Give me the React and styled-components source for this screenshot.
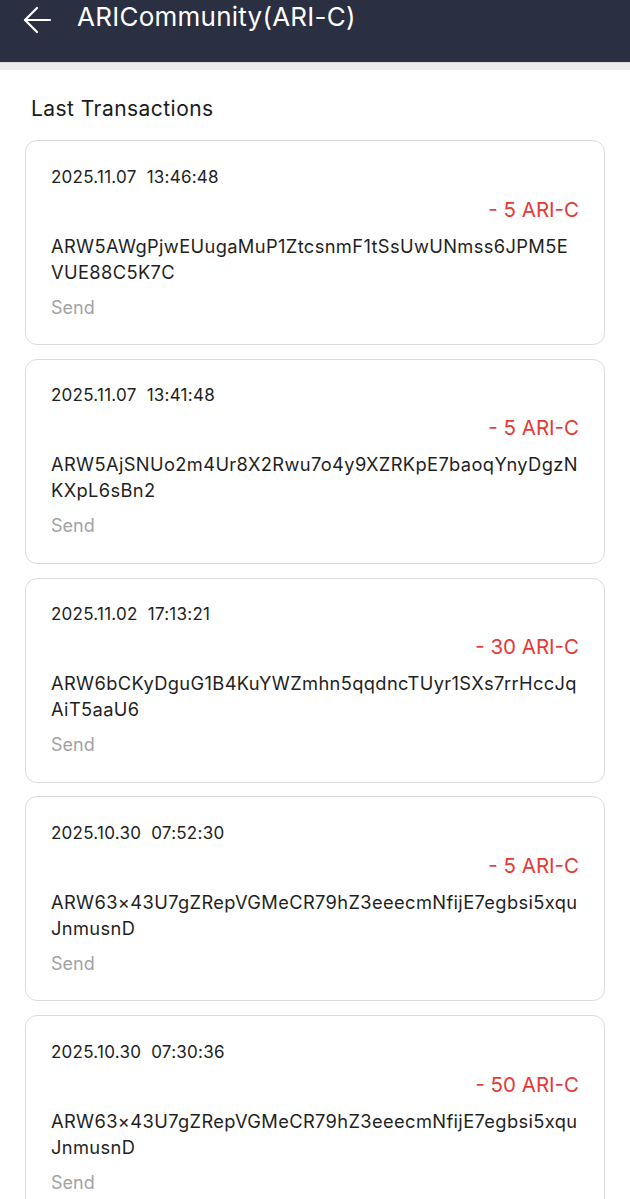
import styled, { createGlobalStyle } from "styled-components";

const GlobalStyle = createGlobalStyle`
  * { box-sizing: border-box; }
  body {
    margin: 0;
    background: #ffffff;
    font-family: Inter, Roboto, "Noto Sans", sans-serif;
    color: #1f1f1f;
  }
`;

const Page = styled.div`
  width: 630px;
  min-height: 1199px;
  background: #ffffff;
  overflow: hidden;
`;

const Header = styled.header`
  height: 62px;
  background: #2b2f42;
  display: flex;
  align-items: flex-start;
  gap: 25px;
  padding: 0 0 0 22px;
  color: #ffffff;
`;

const BackButton = styled.button`
  border: 0;
  background: transparent;
  padding: 0;
  margin-top: 5px;
  width: 30px;
  height: 30px;
  display: flex;
  align-items: center;
  justify-content: center;
  color: #ffffff;
`;

const Title = styled.h1`
  margin: 0;
  font-size: 26px;
  font-weight: 400;
  line-height: 34px;
  letter-spacing: 0.25px;
`;

const Divider = styled.div`
  height: 8px;
  background: #ececec;
  border-top: 1px solid #d9d9d9;
`;

const Content = styled.main`
  padding: 25px 25px 0;
`;

const SectionTitle = styled.h2`
  margin: 0 0 17px 6px;
  font-size: 21px;
  font-weight: 400;
  line-height: 28px;
  letter-spacing: 0.45px;
  color: #1a1a1a;
`;

const List = styled.div`
  display: flex;
  flex-direction: column;
  gap: 13.75px;
`;

const Card = styled.div`
  border: 1px solid #dcdcdc;
  border-radius: 12px;
  padding: 24.5px 23px 24.5px 25px;
  display: flex;
  flex-direction: column;
`;

const DateText = styled.div`
  font-size: 17px;
  line-height: 22px;
  letter-spacing: 0.25px;
  color: #222;
  white-space: pre;
`;

const Amount = styled.div`
  margin: 10px 2px 0 0;
  text-align: right;
  font-size: 20.5px;
  line-height: 24px;
  color: ${p => (p.$negative ? "#e53935" : "#2e7d32")};
`;

const Address = styled.div`
  margin-top: 11px;
  font-size: 18.3px;
  line-height: 26px;
  letter-spacing: 0.37px;
  color: #1f1f1f;
  word-break: break-all;
`;

const Kind = styled.div`
  margin-top: 11px;
  font-size: 18px;
  line-height: 24px;
  color: #a3a3a3;
`;

const transactions = [
  { date: "2025.11.07  13:46:48", amount: "- 5 ARI-C", address: "ARW5AWgPjwEUugaMuP1ZtcsnmF1tSsUwUNmss6JPM5EVUE88C5K7C" },
  { date: "2025.11.07  13:41:48", amount: "- 5 ARI-C", address: "ARW5AjSNUo2m4Ur8X2Rwu7o4y9XZRKpE7baoqYnyDgzNKXpL6sBn2" },
  { date: "2025.11.02  17:13:21", amount: "- 30 ARI-C", address: "ARW6bCKyDguG1B4KuYWZmhn5qqdncTUyr1SXs7rrHccJqAiT5aaU6" },
  { date: "2025.10.30  07:52:30", amount: "- 5 ARI-C", address: "ARW63×43U7gZRepVGMeCR79hZ3eeecmNfijE7egbsi5xquJnmusnD" },
  { date: "2025.10.30  07:30:36", amount: "- 50 ARI-C", address: "ARW63×43U7gZRepVGMeCR79hZ3eeecmNfijE7egbsi5xquJnmusnD" },
];

const BackArrow = () => (
  <svg width="30" height="30" viewBox="0 0 30 30" fill="none" stroke="currentColor" strokeWidth="2.2" strokeLinecap="round" strokeLinejoin="round">
    <path d="M28 15H3" />
    <path d="M15 3L3 15l12 12" />
  </svg>
);

export default function App() {
  return (
    <Page>
      <GlobalStyle />
      <Header>
        <BackButton aria-label="back">
          <BackArrow />
        </BackButton>
        <Title>ARICommunity(ARI-C)</Title>
      </Header>
      <Divider />
      <Content>
        <SectionTitle>Last Transactions</SectionTitle>
        <List>
          {transactions.map((t, i) => (
            <Card key={i}>
              <DateText>{t.date}</DateText>
              <Amount $negative>{t.amount}</Amount>
              <Address>{t.address}</Address>
              <Kind>Send</Kind>
            </Card>
          ))}
        </List>
      </Content>
    </Page>
  );
}
